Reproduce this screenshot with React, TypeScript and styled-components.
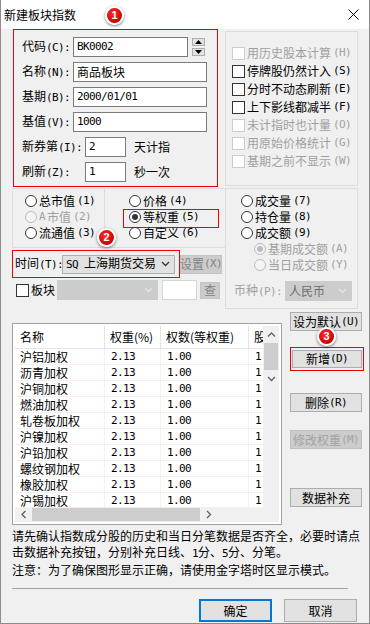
import React from 'react';
import styled, { createGlobalStyle, css } from 'styled-components';

const Global = createGlobalStyle`
  html, body { margin: 0; padding: 0; background: #f0f0f0; }
  body { font-family: "Noto Sans CJK SC", sans-serif; }
  * { box-sizing: border-box; }
`;

const RED = '#e8000b';
const redBorder = css`border: 1px solid ${RED};`;

const Window = styled.div`
  position: relative;
  width: 370px;
  height: 624px;
  border: 1px solid #8c8c8c;
  border-top: 0;
  background: #f0f0f0;
  overflow: hidden;
  font-family: "Noto Sans CJK SC", sans-serif;
  font-size: 12px;
  line-height: 16px;
  color: #000;
`;

const TitleBar = styled.div`
  height: 29px;
  background: #fff;
  display: flex;
  align-items: center;
  justify-content: space-between;
  padding: 0 10px 0 3px;
`;

const TitleText = styled.span`
  font-size: 12px;
  color: #000;
`;

const Body = styled.div`
  display: flex;
  flex-direction: column;
  padding-left: 11px;
`;

const Ascii = styled.span`
  font-family: "DejaVu Sans Mono", monospace;
  font-size: 11px;
  letter-spacing: -0.6px;
`;

function T({ s }: { s: string }) {
  const parts = s.split(/([\x20-\x7e]+)/).filter(Boolean);
  return (
    <>
      {parts.map((p, i) =>
        /^[\x20-\x7e]+$/.test(p) ? <Ascii key={i}>{p}</Ascii> : <React.Fragment key={i}>{p}</React.Fragment>
      )}
    </>
  );
}

/* ---------- top section ---------- */
const TopSection = styled.div`
  display: flex;
  align-items: flex-start;
`;

const IndexFrame = styled.div`
  ${redBorder};
  margin-left: 1px;
  width: 205px;
  height: 158px;
  padding: 7px 0 0 8px;
  display: flex;
  flex-direction: column;
  gap: 5px;
`;

const FieldRow = styled.div`
  display: flex;
  align-items: center;
  height: 20px;
`;

const FieldLabel = styled.span<{ $w: number }>`
  width: ${(p) => p.$w}px;
  white-space: nowrap;
`;

const TextInput = styled.div<{ $w: number }>`
  width: ${(p) => p.$w}px;
  height: 20px;
  border: 1px solid #7a7a7a;
  background: #fff;
  padding: 0 3px;
  display: flex;
  align-items: center;
  white-space: nowrap;
  overflow: hidden;
`;

const Spin = styled.div`
  display: flex;
  flex-direction: column;
  gap: 2px;
  margin-left: 4px;
`;

const SpinBtn = styled.div`
  width: 13px;
  height: 8px;
  background: #e1e1e1;
  border: 1px solid #adadad;
  display: flex;
  align-items: center;
  justify-content: center;
`;

const Suffix = styled.span`
  margin-left: 8px;
`;

const GroupBox = styled.div<{ $w: number; $h: number }>`
  width: ${(p) => p.$w}px;
  height: ${(p) => p.$h}px;
  border: 1px solid #dcdcdc;
`;

const OptionsBox = styled(GroupBox)`
  margin: 2px 0 0 7px;
  padding: 12px 0 0 6px;
`;

const CheckRow = styled.div<{ $disabled?: boolean }>`
  display: flex;
  align-items: center;
  gap: 2px;
  height: 18px;
  white-space: nowrap;
  color: ${(p) => (p.$disabled ? '#a0a0a0' : '#000')};
`;

const CheckBox = styled.span<{ $disabled?: boolean }>`
  width: 13px;
  height: 13px;
  flex: none;
  border: 1px solid ${(p) => (p.$disabled ? '#cccccc' : '#333')};
  background: #fff;
`;

/* ---------- middle section ---------- */
const MidSection = styled.div`
  display: flex;
  margin-top: 1px;
`;

const LeftCol = styled.div`
  width: 214px;
  display: flex;
  flex-direction: column;
`;

const GroupsRow = styled.div`
  display: flex;
`;

const RadioBox = styled(GroupBox)<{ $pl: number; $ml?: number }>`
  padding: 4px 0 0 ${(p) => p.$pl}px;
  margin-left: ${(p) => p.$ml ?? 0}px;
`;

const RadioRow = styled.div<{ $disabled?: boolean; $indent?: number; $marked?: boolean }>`
  position: relative;
  display: flex;
  align-items: center;
  gap: 2px;
  height: 16px;
  margin-left: ${(p) => p.$indent ?? 0}px;
  white-space: nowrap;
  color: ${(p) => (p.$disabled ? '#a0a0a0' : '#000')};
  ${(p) =>
    p.$marked &&
    css`
      &::after {
        content: '';
        position: absolute;
        left: -6px;
        top: 0;
        width: 94px;
        height: 17px;
        ${redBorder};
      }
    `}
`;

const Radio = styled.span<{ $checked?: boolean; $disabled?: boolean }>`
  width: 12px;
  height: 12px;
  flex: none;
  border-radius: 50%;
  border: 1px solid ${(p) => (p.$disabled ? '#bcbcbc' : '#333')};
  background: ${(p) => (p.$disabled ? '#f4f4f4' : '#fff')};
  display: flex;
  align-items: center;
  justify-content: center;
  &::after {
    content: '';
    display: ${(p) => (p.$checked ? 'block' : 'none')};
    width: 6px;
    height: 6px;
    border-radius: 50%;
    background: ${(p) => (p.$disabled ? '#bcbcbc' : '#333')};
  }
`;

const TimeRow = styled.div`
  display: flex;
  align-items: center;
  margin-top: 2px;
`;

const TimeFrame = styled.div`
  ${redBorder};
  width: 168px;
  height: 28px;
  padding-left: 2px;
  display: flex;
  align-items: center;
`;

const ComboBox = styled.div<{ $w: number; $h: number; $disabled?: boolean }>`
  width: ${(p) => p.$w}px;
  height: ${(p) => p.$h}px;
  background: ${(p) => (p.$disabled ? '#cccccc' : '#e1e1e1')};
  border: 1px solid ${(p) => (p.$disabled ? '#cccccc' : '#adadad')};
  color: ${(p) => (p.$disabled ? '#6d6d6d' : '#000')};
  padding: 0 4px 0 3px;
  display: flex;
  align-items: center;
  justify-content: space-between;
  white-space: nowrap;
`;

const SmallButton = styled.div<{ $w: number; $h: number; $ml: number }>`
  width: ${(p) => p.$w}px;
  height: ${(p) => p.$h}px;
  margin-left: ${(p) => p.$ml}px;
  background: #cccccc;
  border: 1px solid #c4c4c4;
  color: #838383;
  display: flex;
  align-items: center;
  justify-content: center;
  white-space: nowrap;
`;

const BoardRow = styled.div`
  display: flex;
  align-items: center;
  height: 20px;
  margin-top: 2px;
  padding-left: 4px;
`;

const BoardLabel = styled.span`
  margin: 0 2px 0 2px;
`;

const BlankInput = styled.div`
  width: 35px;
  height: 20px;
  margin-left: 4px;
  background: #fff;
  border: 1px solid #d5d5d5;
`;

const VolumeBox = styled(GroupBox)`
  margin-left: -1px;
  padding: 4px 0 0 15px;
`;

const CurrencyRow = styled.div`
  display: flex;
  align-items: center;
  margin: 8px 0 0 -7px;
`;

const DimLabel = styled.span`
  width: 51px;
  color: #a0a0a0;
  white-space: nowrap;
`;

/* ---------- list section ---------- */
const ListSection = styled.div`
  display: flex;
  margin-top: 3px;
`;

const ListBox = styled.div`
  margin-top: 11px;
  width: 270px;
  height: 202px;
  border: 1px solid #a0a0a0;
  padding: 2px;
  background: #fff;
  display: grid;
  grid-template-columns: 248px 16px;
  grid-template-rows: 181px 15px;
`;

const TableArea = styled.div`
  overflow: hidden;
  font-family: "Noto Sans CJK SC", sans-serif;
`;

const TableRow = styled.div<{ $head?: boolean }>`
  display: grid;
  grid-template-columns: 90px 56px 88px 60px;
  height: ${(p) => (p.$head ? 23 : 16)}px;
  border-bottom: 1px solid ${(p) => (p.$head ? '#e5e5e5' : '#f0f0f0')};
  line-height: ${(p) => (p.$head ? 22 : 15)}px;
  font-size: 12px;
`;

const Cell = styled.div<{ $head?: boolean }>`
  padding-left: 5px;
  border-right: 1px solid ${(p) => (p.$head ? '#e5e5e5' : '#f0f0f0')};
  white-space: nowrap;
  overflow: hidden;
`;

const NumCell = styled(Cell)`
  padding-left: 6px;
  font-family: "DejaVu Sans Mono", monospace;
  font-size: 11px;
  letter-spacing: -0.6px;
`;

const VScroll = styled.div`
  background: #f0f0f0;
  display: flex;
  flex-direction: column;
  align-items: center;
`;

const ArrowCell = styled.div<{ $w: number; $h: number; $end?: boolean }>`
  width: ${(p) => p.$w}px;
  height: ${(p) => p.$h}px;
  flex: none;
  margin-${(p) => (p.$w > p.$h ? 'top' : 'left')}: ${(p) => (p.$end ? 'auto' : '0')};
  display: flex;
  align-items: center;
  justify-content: center;
`;

const VThumb = styled.div`
  width: 14px;
  height: 27px;
  background: #cdcdcd;
`;

const HScroll = styled.div`
  background: #f0f0f0;
  display: flex;
  align-items: center;
`;

const HThumb = styled.div`
  width: 168px;
  height: 13px;
  background: #cdcdcd;
`;

const Corner = styled.div`
  background: #f0f0f0;
`;

const SideCol = styled.div`
  display: flex;
  flex-direction: column;
  margin-left: 8px;
`;

const PushButton = styled.div<{ $mt?: number; $disabled?: boolean; $w?: number; $h?: number }>`
  width: ${(p) => p.$w ?? 72}px;
  height: ${(p) => p.$h ?? 19}px;
  margin-top: ${(p) => p.$mt ?? 0}px;
  background: ${(p) => (p.$disabled ? '#cccccc' : '#e1e1e1')};
  border: 1px solid ${(p) => (p.$disabled ? '#bfbfbf' : '#adadad')};
  color: ${(p) => (p.$disabled ? '#a3a3a3' : '#000')};
  display: flex;
  align-items: center;
  justify-content: center;
  white-space: nowrap;
`;

const AddFrame = styled.div`
  ${redBorder};
  width: 74px;
  height: 24px;
  margin-top: 16px;
  padding: 2px 0 0 1px;
`;

/* ---------- bottom ---------- */
const Notice = styled.div`
  margin-top: 3px;
  line-height: 16px;
  white-space: nowrap;
`;

const Separator = styled.div`
  margin-top: 10px;
  width: 336px;
  height: 1px;
  background: #a0a0a0;
`;

const Footer = styled.div`
  display: flex;
  justify-content: flex-end;
  gap: 12px;
  margin-top: 10px;
  padding-right: 12px;
`;

const DialogButton = styled.div<{ $primary?: boolean }>`
  width: 73px;
  height: 23px;
  background: #e1e1e1;
  border: ${(p) => (p.$primary ? '2px solid #0078d7' : '1px solid #adadad')};
  display: flex;
  align-items: center;
  justify-content: center;
`;

const Badge = styled.div<{ $x: number; $y: number }>`
  position: absolute;
  left: ${(p) => p.$x}px;
  top: ${(p) => p.$y}px;
  width: 19px;
  height: 19px;
  border-radius: 50%;
  border: 2px solid #fff;
  background: radial-gradient(circle at 40% 35%, #ff2a2a, #d10000 70%);
  box-shadow: 0 1px 3px rgba(0, 0, 0, 0.55);
  color: #fff;
  font-family: "Liberation Sans", sans-serif;
  font-weight: bold;
  font-size: 11px;
  line-height: 15px;
  text-align: center;
`;

/* ---------- icons ---------- */
const CloseIcon = () => (
  <svg width="11" height="11" viewBox="0 0 11 11">
    <path d="M0.5 0.5 L10.5 10.5 M10.5 0.5 L0.5 10.5" stroke="#000" strokeWidth="1" />
  </svg>
);

const Chevron = ({ dir, color = '#333' }: { dir: 'up' | 'down' | 'left' | 'right'; color?: string }) => {
  const d = {
    down: 'M1 1 L4.5 4.5 L8 1',
    up: 'M1 4.5 L4.5 1 L8 4.5',
    left: 'M4.5 1 L1 4.5 L4.5 8',
    right: 'M1 1 L4.5 4.5 L1 8',
  }[dir];
  const horiz = dir === 'up' || dir === 'down';
  return (
    <svg width={horiz ? 9 : 6} height={horiz ? 6 : 9} viewBox={horiz ? '0 0 9 6' : '0 0 6 9'}>
      <path d={d} fill="none" stroke={color} strokeWidth="1.3" />
    </svg>
  );
};

const Tri = ({ up }: { up?: boolean }) => (
  <svg width="7" height="4" viewBox="0 0 7 4">
    <path d={up ? 'M0 4 L3.5 0 L7 4 Z' : 'M0 0 L7 0 L3.5 4 Z'} fill="#000" />
  </svg>
);

const rows = ['沪铝加权', '沥青加权', '沪铜加权', '燃油加权', '轧卷板加权', '沪镍加权', '沪铅加权', '螺纹钢加权', '橡胶加权', '沪锡加权', '沪锌加权'];

export default function App() {
  return (
    <>
      <Global />
      <Window>
        <TitleBar>
          <TitleText>新建板块指数</TitleText>
          <CloseIcon />
        </TitleBar>
        <Body>
          <TopSection>
            <IndexFrame>
              <FieldRow>
                <FieldLabel $w={51}><T s="代码(C):" /></FieldLabel>
                <TextInput $w={115}><T s="BK0002" /></TextInput>
                <Spin>
                  <SpinBtn><Tri up /></SpinBtn>
                  <SpinBtn><Tri /></SpinBtn>
                </Spin>
              </FieldRow>
              <FieldRow>
                <FieldLabel $w={51}><T s="名称(N):" /></FieldLabel>
                <TextInput $w={134}>商品板块</TextInput>
              </FieldRow>
              <FieldRow>
                <FieldLabel $w={51}><T s="基期(B):" /></FieldLabel>
                <TextInput $w={134}><T s="2000/01/01" /></TextInput>
              </FieldRow>
              <FieldRow>
                <FieldLabel $w={51}><T s="基值(V):" /></FieldLabel>
                <TextInput $w={134}><T s="1000" /></TextInput>
              </FieldRow>
              <FieldRow>
                <FieldLabel $w={63}><T s="新券第(I):" /></FieldLabel>
                <TextInput $w={41}><T s="2" /></TextInput>
                <Suffix>天计指</Suffix>
              </FieldRow>
              <FieldRow>
                <FieldLabel $w={63}><T s="刷新(Z):" /></FieldLabel>
                <TextInput $w={41}><T s="1" /></TextInput>
                <Suffix>秒一次</Suffix>
              </FieldRow>
            </IndexFrame>
            <OptionsBox $w={133} $h={155}>
              <CheckRow $disabled><CheckBox $disabled /><T s="用历史股本计算(H)" /></CheckRow>
              <CheckRow><CheckBox /><T s="停牌股仍然计入(S)" /></CheckRow>
              <CheckRow><CheckBox /><T s="分时不动态刷新(E)" /></CheckRow>
              <CheckRow><CheckBox /><T s="上下影线都减半(F)" /></CheckRow>
              <CheckRow $disabled><CheckBox $disabled /><T s="未计指时也计量(O)" /></CheckRow>
              <CheckRow $disabled><CheckBox $disabled /><T s="用原始价格统计(G)" /></CheckRow>
              <CheckRow $disabled><CheckBox $disabled /><T s="基期之前不显示(W)" /></CheckRow>
            </OptionsBox>
          </TopSection>

          <MidSection>
            <LeftCol>
              <GroupsRow>
                <RadioBox $w={93} $h={60} $pl={12}>
                  <RadioRow><Radio /><T s="总市值(1)" /></RadioRow>
                  <RadioRow $disabled><Radio $disabled /><T s="A市值(2)" /></RadioRow>
                  <RadioRow><Radio /><T s="流通值(3)" /></RadioRow>
                </RadioBox>
                <RadioBox $w={122} $h={60} $pl={24} $ml={-1}>
                  <RadioRow><Radio /><T s="价格(4)" /></RadioRow>
                  <RadioRow $marked><Radio $checked /><T s="等权重(5)" /></RadioRow>
                  <RadioRow><Radio /><T s="自定义(6)" /></RadioRow>
                </RadioBox>
              </GroupsRow>
              <TimeRow>
                <TimeFrame>
                  <FieldLabel $w={47}><T s="时间(T):" /></FieldLabel>
                  <ComboBox $w={113} $h={19}>
                    <span><T s="SQ 上海期货交易" /></span>
                    <Chevron dir="down" />
                  </ComboBox>
                </TimeFrame>
                <SmallButton $w={42} $h={19} $ml={0}><T s="设置(X)" /></SmallButton>
              </TimeRow>
              <BoardRow>
                <CheckBox />
                <BoardLabel>板块</BoardLabel>
                <ComboBox $w={101} $h={20} $disabled>
                  <span />
                  <Chevron dir="down" color="#e4e4e4" />
                </ComboBox>
                <BlankInput />
                <SmallButton $w={20} $h={17} $ml={3}>查</SmallButton>
              </BoardRow>
            </LeftCol>
            <VolumeBox $w={133} $h={121}>
              <RadioRow><Radio /><T s="成交量(7)" /></RadioRow>
              <RadioRow><Radio /><T s="持仓量(8)" /></RadioRow>
              <RadioRow><Radio /><T s="成交额(9)" /></RadioRow>
              <RadioRow $disabled $indent={13}><Radio $disabled $checked /><T s="基期成交额(A)" /></RadioRow>
              <RadioRow $disabled $indent={13}><Radio $disabled /><T s="当日成交额(Y)" /></RadioRow>
              <CurrencyRow>
                <DimLabel><T s="币种(P):" /></DimLabel>
                <ComboBox $w={67} $h={20} $disabled>
                  <span>人民币</span>
                  <Chevron dir="down" color="#e4e4e4" />
                </ComboBox>
              </CurrencyRow>
            </VolumeBox>
          </MidSection>

          <ListSection>
            <ListBox>
              <TableArea>
                <TableRow $head>
                  <Cell $head>名称</Cell>
                  <Cell $head>权重(%)</Cell>
                  <Cell $head>权数(等权重)</Cell>
                  <Cell $head>股数</Cell>
                </TableRow>
                {rows.map((r) => (
                  <TableRow key={r}>
                    <Cell>{r}</Cell>
                    <NumCell>2.13</NumCell>
                    <NumCell>1.00</NumCell>
                    <NumCell>1</NumCell>
                  </TableRow>
                ))}
              </TableArea>
              <VScroll>
                <ArrowCell $w={16} $h={17}><Chevron dir="up" color="#606060" /></ArrowCell>
                <VThumb />
                <ArrowCell $w={16} $h={17} $end><Chevron dir="down" color="#606060" /></ArrowCell>
              </VScroll>
              <HScroll>
                <ArrowCell $w={17} $h={15}><Chevron dir="left" color="#606060" /></ArrowCell>
                <HThumb />
                <ArrowCell $w={17} $h={15} $end><Chevron dir="right" color="#606060" /></ArrowCell>
              </HScroll>
              <Corner />
            </ListBox>
            <SideCol>
              <PushButton><T s="设为默认(U)" /></PushButton>
              <AddFrame>
                <PushButton $w={70} $h={18}><T s="新增(D)" /></PushButton>
              </AddFrame>
              <PushButton $mt={22}><T s="删除(R)" /></PushButton>
              <PushButton $mt={18} $disabled><T s="修改权重(M)" /></PushButton>
              <PushButton $mt={39}>数据补充</PushButton>
            </SideCol>
          </ListSection>

          <Notice>
            <div>请先确认指数成分股的历史和当日分笔数据是否齐全，必要时请点</div>
            <div>击数据补充按钮，分别补充日线、<T s="1" />分、<T s="5" />分、分笔。</div>
            <div>注意：为了确保图形显示正确，请使用金字塔时区显示模式。</div>
          </Notice>
          <Separator />
          <Footer>
            <DialogButton $primary>确定</DialogButton>
            <DialogButton>取消</DialogButton>
          </Footer>
        </Body>
        <Badge $x={104} $y={6}>1</Badge>
        <Badge $x={96} $y={228}>2</Badge>
        <Badge $x={316} $y={327}>3</Badge>
      </Window>
    </>
  );
}
